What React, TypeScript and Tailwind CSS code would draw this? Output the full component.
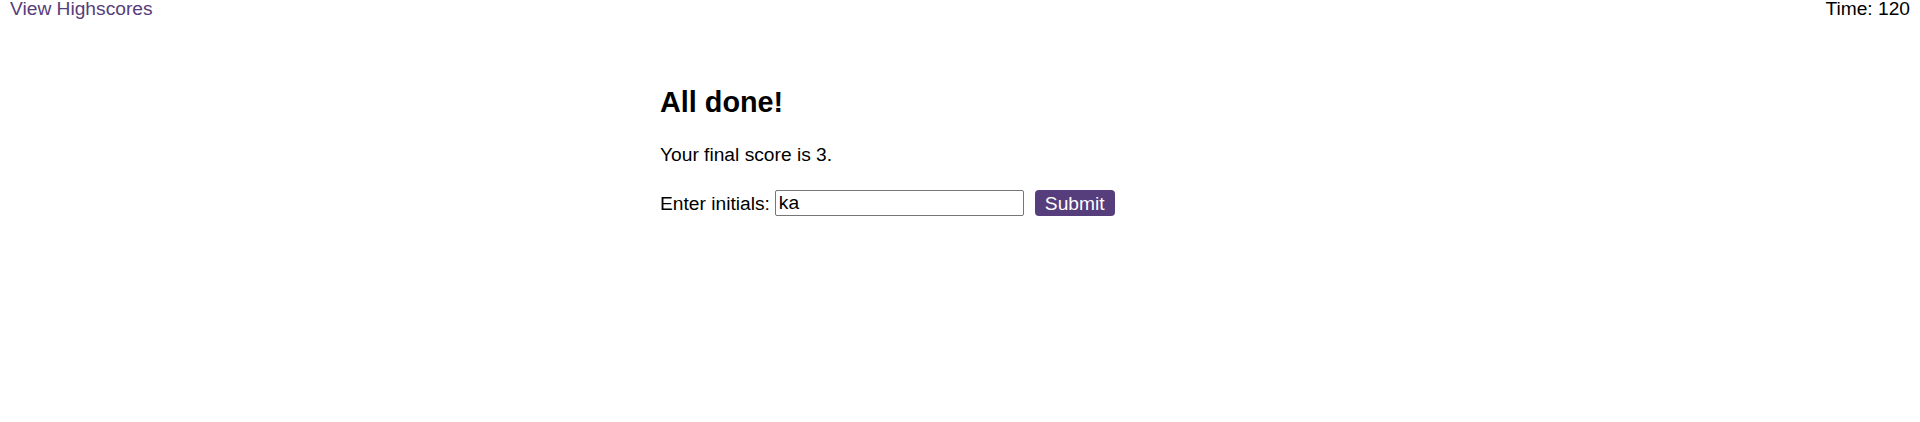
import { FC } from "react";

const Header: FC = () => (
  <header className="flex justify-between px-[10px] leading-[18px]">
    <a href="#" className="text-[#563d7c]">
      View Highscores
    </a>
    <span>Time: 120</span>
  </header>
);

const DoneCard: FC = () => (
  <main className="mx-auto w-[600px] pt-[69px]">
    <h2 className="text-[28.8px] font-bold leading-[31px]">All done!</h2>
    <p className="mt-[26px] leading-[21px]">Your final score is 3.</p>
    <form className="mt-[25px] flex items-center leading-[21px]">
      <label htmlFor="initials">Enter initials:</label>
      <input
        id="initials"
        defaultValue="ka"
        className="ml-[5px] h-[26px] w-[249px] rounded-[2px] border border-[#767676] px-[3px] leading-[21px] text-black outline-none"
      />
      <button
        type="button"
        className="ml-[11px] h-[26px] rounded-[4px] bg-[#563d7c] px-[10px] leading-[21px] text-white"
      >
        Submit
      </button>
    </form>
  </main>
);

export default function App() {
  return (
    <div className="min-h-[422px] bg-white font-['Liberation_Sans',Arial,sans-serif] text-[19.2px] text-black">
      <Header />
      <DoneCard />
    </div>
  );
}
